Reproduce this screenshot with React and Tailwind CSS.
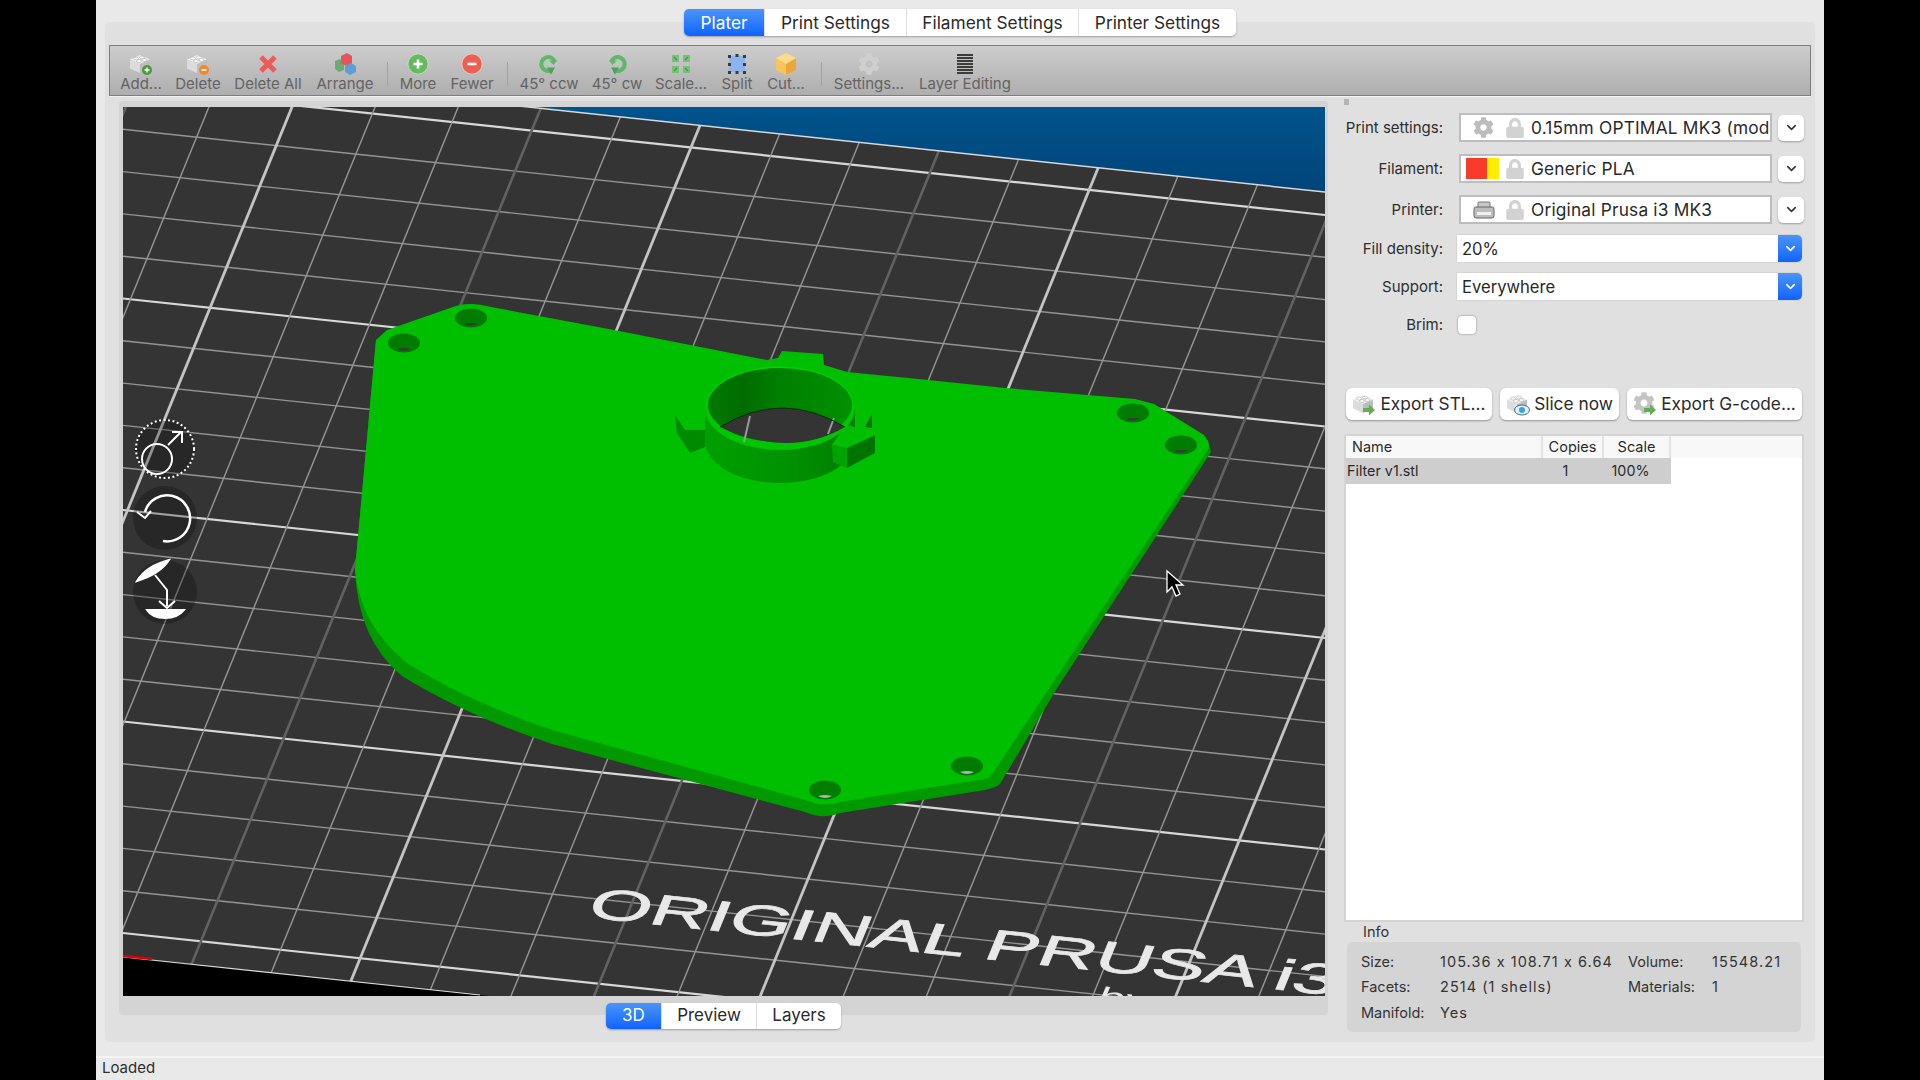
import { FaCog, FaLock } from 'react-icons/fa'
import { ChevronDown } from 'lucide-react'

function Brick({ className, badge }) {
  return (
    <svg viewBox="0 0 24 24" className={className}>
      <polygon points="11,3 21,7.5 11,12 1,7.5" fill="#f0f0f0" />
      <polygon points="1,7.5 11,12 11,21 1,16.5" fill="#dcdcdc" />
      <polygon points="21,7.5 11,12 11,21 21,16.5" fill="#bdbdbd" />
      <ellipse cx="7" cy="6.5" rx="2.4" ry="1.5" fill="#fff" stroke="#aaa" strokeWidth="0.6" />
      <ellipse cx="13" cy="5.5" rx="2.4" ry="1.5" fill="#fff" stroke="#aaa" strokeWidth="0.6" />
      <ellipse cx="10" cy="9" rx="2.4" ry="1.5" fill="#fff" stroke="#aaa" strokeWidth="0.6" />
      <ellipse cx="15.5" cy="8" rx="2.4" ry="1.5" fill="#fff" stroke="#aaa" strokeWidth="0.6" />
      {badge}
    </svg>
  )
}

const plusBadge = (
  <g>
    <circle cx="18" cy="18" r="5" fill="#4a9a3e" />
    <path d="M18 15.5v5M15.5 18h5" stroke="#fff" strokeWidth="1.4" />
  </g>
)
const minusBadge = (
  <g>
    <circle cx="18" cy="18" r="5" fill="#ee8a2c" />
    <path d="M15.5 18h5" stroke="#fff" strokeWidth="1.6" />
  </g>
)
const arrowBadge = <polygon points="11,16 17,16 17,12.5 23,18 17,23.5 17,20 11,20" fill="#62ad55" />
const eyeBadge = (
  <g>
    <ellipse cx="16" cy="18" rx="7.5" ry="5" fill="#dff0fa" stroke="#466a80" strokeWidth="1" />
    <circle cx="16" cy="18" r="3" fill="#3ea3dc" />
  </g>
)

function CircleBtn({ color, minus }) {
  return (
    <svg viewBox="0 0 22 22" className="w-[22px] h-[22px]">
      <circle cx="11" cy="11" r="10" fill={color} stroke="#ffffff" strokeOpacity="0.35" />
      <path d={minus ? 'M6.5 11h9' : 'M6.5 11h9M11 6.5v9'} stroke="#fff" strokeWidth="2.6" />
    </svg>
  )
}

function RotateIcon({ flip }) {
  return (
    <svg viewBox="0 0 22 22" className="w-[22px] h-[22px]">
      <g transform={flip ? 'translate(22 0) scale(-1 1)' : undefined}>
        <path d="M17 9A7 7 0 1 0 14 17" fill="none" stroke="#62b56c" strokeWidth="4" />
        <polygon points="9,14.500 17,14.500 13,21.500" fill="#4fa25a" />
        <path d="M11 7.500H19L15.500 12Z" fill="#62b56c" />
        <circle cx="10" cy="10.500" r="2.200" fill="#a4d8a8" />
      </g>
    </svg>
  )
}

function Tool({ w, label, children }) {
  return (
    <div className={`flex flex-col items-center shrink-0 ${w}`}>
      <div className="h-[23px] flex items-center justify-center">{children}</div>
      <span className="text-[15px] leading-[17px] text-[#636363] whitespace-nowrap">{label}</span>
    </div>
  )
}

function Sep({ w }) {
  return (
    <div className={`shrink-0 flex justify-center ${w}`}>
      <div className="w-px h-[24px] mt-[10px] bg-[#a2a2a2]" />
    </div>
  )
}

function Toolbar() {
  return (
    <div className="h-[51px] mx-[4px] flex pl-[7px] pt-[6px] border border-[#7d7d7d] bg-linear-to-b from-[#cdcdcd] to-[#aeaeae] shadow-[0_1px_0_#f4f4f4]">
      <Tool w="w-[48px]" label="Add...">
        <Brick className="w-[24px] h-[24px]" badge={plusBadge} />
      </Tool>
      <Tool w="w-[66px]" label="Delete">
        <Brick className="w-[24px] h-[24px]" badge={minusBadge} />
      </Tool>
      <Tool w="w-[74px]" label="Delete All">
        <svg viewBox="0 0 22 22" className="w-[22px] h-[22px]">
          <path d="M4 4L18 18M18 4L4 18" stroke="#ee5a5a" strokeWidth="5" />
        </svg>
      </Tool>
      <Tool w="w-[80px]" label="Arrange">
        <svg viewBox="0 0 24 24" className="w-[24px] h-[24px]">
          <polygon points="2,9 7,7 11,10 11,18 6,20 2,17" fill="#6cab74" />
          <polygon points="8,4 14,1 19,4 19,12 13,14 8,11" fill="#e6525f" />
          <polygon points="12,14 18,11 23,14 23,20 17,23 12,20" fill="#5c9fd6" />
        </svg>
      </Tool>
      <Sep w="w-[4px]" />
      <Tool w="w-[58px]" label="More">
        <CircleBtn color="#66b95c" />
      </Tool>
      <Tool w="w-[50px]" label="Fewer">
        <CircleBtn color="#ee5f52" minus />
      </Tool>
      <Sep w="w-[20px]" />
      <Tool w="w-[64px]" label="45° ccw">
        <RotateIcon />
      </Tool>
      <Tool w="w-[72px]" label="45° cw">
        <RotateIcon flip />
      </Tool>
      <Tool w="w-[56px]" label="Scale...">
        <svg viewBox="0 0 22 22" className="w-[22px] h-[22px]">
          <path d="M2 2h7v7H2zM13 2h7v7h-7zM2 13h7v7H2zM13 13h7v7h-7z" fill="#74c178" />
          <path d="M4 4l3 3M18 4l-3 3M4 18l3-3M18 18l-3-3" stroke="#3f9a48" strokeWidth="1.2" />
        </svg>
      </Tool>
      <Tool w="w-[56px]" label="Split">
        <svg viewBox="0 0 22 22" className="w-[22px] h-[22px]">
          <rect x="3" y="3" width="16" height="16" fill="#8eb4ee" />
          <path d="M2 2h3v3H2zM9.500 1h3v3h-3zM17 2h3v3h-3zM2 10h3v3H2zM17 10h3v3h-3zM2 18h3v3H2zM9.500 18h3v3h-3zM17 18h3v3h-3z" fill="#3b3b3b" />
        </svg>
      </Tool>
      <Tool w="w-[42px]" label="Cut...">
        <svg viewBox="0 0 24 24" className="w-[24px] h-[24px]">
          <polygon points="12,1 22,6 22,18 12,23 2,18 2,6" fill="#f6c65d" />
          <polygon points="12,12 22,6 22,18 12,23" fill="#eaa83a" />
          <polygon points="12,1 22,6 12,12 2,6" fill="#fbdc8d" />
        </svg>
      </Tool>
      <Sep w="w-[28px]" />
      <Tool w="w-[68px]" label="Settings...">
        <FaCog className="w-[22px] h-[22px] text-[#cfcfcf]" />
      </Tool>
      <Tool w="w-[124px]" label="Layer Editing">
        <div className="flex flex-col gap-[1px] w-[16px]">
          {[0, 1, 2, 3, 4, 5, 6].map((i) => (
            <div key={i} className="h-[2px] bg-[#3c3c3c]" />
          ))}
        </div>
      </Tool>
    </div>
  )
}

const segOn = 'flex items-center justify-center text-white bg-linear-to-b from-[#4a94f8] to-[#0f62fe]'
const segOff = 'flex items-center justify-center text-[#2a2a2a] bg-white border-l border-[#dedede]'

function TopTabs() {
  return (
    <div className="flex justify-center h-[27px] -mt-[13px]">
      <div className="flex rounded-[5px] overflow-hidden shadow-[0_1px_2px_rgba(0,0,0,0.3)] text-[17.300px]">
        <div className={`${segOn} w-[80px]`}>Plater</div>
        <div className={`${segOff} w-[142px]`}>Print Settings</div>
        <div className={`${segOff} w-[172px]`}>Filament Settings</div>
        <div className={`${segOff} w-[158px]`}>Printer Settings</div>
      </div>
    </div>
  )
}

// bed grid, lines follow the perspective of the reference
const hLines = Array.from({ length: 21 }, (_, k) => k)
const vLines = Array.from({ length: 26 }, (_, k) => k - 6)
const dimV = [-2, 3, 8, 13]

function Scene() {
  return (
    <svg viewBox="123 107 1202 889" className="block w-[1202px] h-[889px]">
      <defs>
        <linearGradient id="sky" x1="0" y1="0" x2="0" y2="1">
          <stop offset="0" stopColor="#00548c" />
          <stop offset="1" stopColor="#00447a" />
        </linearGradient>
        <linearGradient id="wall" x1="0" y1="0" x2="1" y2="0">
          <stop offset="0" stopColor="#007a00" />
          <stop offset="0.25" stopColor="#006c00" />
          <stop offset="0.5" stopColor="#008000" />
          <stop offset="1" stopColor="#009000" />
        </linearGradient>
        <linearGradient id="drum" x1="0" y1="0" x2="1" y2="0">
          <stop offset="0" stopColor="#00a000" />
          <stop offset="0.6" stopColor="#009000" />
          <stop offset="1" stopColor="#007c00" />
        </linearGradient>
        <clipPath id="bed">
          <polygon points="123,64 1325,192 1325,1085 123,957" />
        </clipPath>
        <filter id="soft">
          <feGaussianBlur stdDeviation="0.6" />
        </filter>
      </defs>
      <rect x="123" y="107" width="1202" height="889" fill="#000" />
      <polygon points="500,104 1325,192 1325,107 500,107" fill="url(#sky)" />
      <polygon points="123,64 1325,192 1325,1085 123,957" fill="#343434" />
      <g clipPath="url(#bed)">
        <g filter="url(#soft)">
          {hLines.map((k) => {
            const y0 = 87 + 42.3 * k
            const major = k % 5 === 0
            return (
              <line
                key={k}
                x1="123"
                y1={y0}
                x2="1325"
                y2={y0 + 128}
                stroke={major ? '#d8d8d8' : '#949494'}
                strokeWidth={major ? 2.2 : 1.4}
              />
            )
          })}
          {vLines.map((k) => {
            const x0 = 292 + 83.1 * k
            const major = k % 5 === 0
            const dim = dimV.includes(k)
            return (
              <line
                key={k}
                x1={x0 + 0.408 * 107}
                y1="0"
                x2={x0 - 0.408 * 1000}
                y2="1107"
                stroke={major ? '#c4c4c4' : dim ? '#626262' : '#969696'}
                strokeWidth={major ? 2.8 : dim ? 2.6 : 1.4}
              />
            )
          })}
          <text
            fontFamily="Liberation Sans"
            fontSize="42"
            fill="#e8e8e8"
            stroke="#e8e8e8"
            strokeWidth="0.7"
            transform="matrix(1.88 0.197 -0.41 1 585 917)"
          >
            ORIGINAL PRUSA i3
          </text>
          <text
            fontFamily="Liberation Sans"
            fontSize="26"
            fill="#e8e8e8"
            transform="matrix(1.84 0.193 -0.41 1 1095 1005)"
          >
            by
          </text>
        </g>
      </g>
      <line x1="500" y1="104" x2="1325" y2="192" stroke="#d8d8d8" strokeWidth="1.5" />
      <line x1="123" y1="957" x2="480" y2="995" stroke="#d8d8d8" strokeWidth="1.2" />
      <line x1="123" y1="956" x2="152" y2="959" stroke="#e00000" strokeWidth="2.5" />

      {/* plate */}
      <path
        d="M376 340 L355 570 Q358 640 402 676 Q465 715 552 744 L805 812 Q824 820 840 813 L985 790 Q997 787 1000 784 L1056 690 L1211 452 L1208 440 Z"
        fill="#009a00"
      />
      <path
        d="M376 340 L387 330 L453 307 Q468 301 491 307 L614 330 L690 345 L767 360 L778 358 L782 351 L823 354 L824 365 L847 372 L928 380 L1005 388 L1135 399 L1154 404 L1204 435 Q1211 444 1208 450 L1048 690 L993 773 Q990 780 978 780 L840 802 Q826 807 812 802 L798 798 L552 730 Q465 700 407 663 Q360 625 355 570 Z"
        fill="#00bf00"
      />
      {[
        [404, 343],
        [471, 318],
        [1133, 413],
        [1181, 445],
        [825, 790],
        [967, 766],
      ].map(([cx, cy]) => (
        <g key={cx}>
          <ellipse cx={cx} cy={cy} rx="16" ry="9.500" fill="#007c00" />
          <path
            d={`M${cx - 7} ${cy + 6} Q${cx} ${cy + 4} ${cx + 7} ${cy + 6} Q${cx} ${cy + 10} ${cx - 7} ${cy + 6}`}
            fill={cy > 700 ? '#b0b0b0' : '#3a3a3a'}
          />
        </g>
      ))}

      {/* filter ring */}
      <polygon points="675,415 677,433 690,453 705,447 705,430 685,430" fill="#008a00" />
      <polygon points="872,414 872,428 865,427" fill="#007000" />
      <path d="M705 408 L705 441 A75 42 0 0 0 855 441 L855 408 Z" fill="url(#drum)" />
      <polygon points="847,448 875,435 875,453 847,468" fill="#007400" />
      <polygon points="832,445 847,448 847,468 833,462" fill="#00a400" />
      <polygon points="832,445 847,448 875,435 870,430 845,425" fill="#00bf00" />
      <ellipse cx="780" cy="408" rx="75" ry="42" fill="#00c600" />
      <path d="M706 402 A75 42 0 0 1 854 402 A75 38 0 0 0 706 402 Z" fill="#00d800" />
      <ellipse cx="780" cy="405" rx="72" ry="37" fill="url(#wall)" />
      <path d="M720 427 Q782 389 845 427 Q790 459 720 427 Z" fill="#343434" />
      <path d="M744 442 L750 416 M828 434 L834 418" stroke="#9a9a9a" strokeWidth="2" />
      <path d="M720 427 Q782 389 845 427" fill="none" stroke="#003000" strokeWidth="1" />

      {/* gizmos */}
      <g fill="none" stroke="#fff" strokeWidth="2">
        <circle cx="165" cy="449" r="30" fill="#000" fillOpacity="0.25" stroke="none" />
        <circle cx="165" cy="518" r="32" fill="#000" fillOpacity="0.25" stroke="none" />
        <circle cx="165" cy="592" r="32" fill="#000" fillOpacity="0.25" stroke="none" />
        <circle cx="165" cy="449" r="29" strokeDasharray="2 2.500" strokeWidth="2" />
        <circle cx="157" cy="459" r="15" />
        <path d="M168 445L181 432M172 432H182V443" />
        <path d="M163 541A23 23 0 1 0 145 512" strokeWidth="2.500" />
        <path d="M137 512L145 518L151 511" />
        <path d="M155 575L167 590V606M159 601L167 608L175 601" />
        <path d="M137 581Q146 566 169 560Q160 574 137 581Z" fill="#fff" />
        <path d="M147 610H184Q178 618 165 618Q152 618 147 610Z" fill="#fff" />
      </g>

      {/* mouse pointer */}
      <path
        d="M1167 571L1167 592L1172 587L1176 596L1180 594L1176 585L1183 585Z"
        fill="#000"
        stroke="#fff"
        strokeWidth="1.3"
      />
    </svg>
  )
}

function Combo({ label, icon, text }) {
  return (
    <div className="flex items-center h-[29px]">
      <span className="w-[99px] pt-[2px] text-right text-[15px] text-[#2e2e2e] whitespace-nowrap">{label}</span>
      <div className="ml-[16px] w-[313px] h-[29px] flex items-center bg-white border-2 border-[#bdbdbd] overflow-hidden">
        <div className="w-[45px] shrink-0 flex justify-center">{icon}</div>
        <FaLock className="w-[18px] h-[20px] text-[#d2d2d2] shrink-0" />
        <span className="ml-[7px] text-[17.300px] tracking-[0.2px] text-[#2a2a2a] whitespace-nowrap">{text}</span>
      </div>
      <div className="ml-[6px] w-[26px] h-[26px] flex items-center justify-center bg-white rounded-[5px] shadow-[0_1px_2px_rgba(0,0,0,0.3)]">
        <ChevronDown className="w-[15px] h-[15px] text-[#333]" strokeWidth={2.5} />
      </div>
    </div>
  )
}

function Select({ label, value, mt }) {
  return (
    <div className={`flex items-center h-[27px] ${mt}`}>
      <span className="w-[99px] pt-[2px] text-right text-[15px] text-[#2e2e2e]">{label}</span>
      <div className="ml-[14px] w-[345px] h-[27px] flex bg-white rounded-r-[5px] overflow-hidden shadow-[0_0_1px_rgba(0,0,0,0.5)]">
        <span className="flex-1 pl-[5px] text-[16.600px] leading-[28px] text-[#2a2a2a]">{value}</span>
        <div className="w-[24px] flex items-center justify-center bg-linear-to-b from-[#4a94f8] to-[#0f62fe]">
          <ChevronDown className="w-[15px] h-[15px] text-white" strokeWidth={2.5} />
        </div>
      </div>
    </div>
  )
}

function ExportBtn({ w, icon, text }) {
  return (
    <div className={`${w} h-[32px] flex items-center justify-center gap-[4px] bg-white rounded-[6px] shadow-[0_1px_2px_rgba(0,0,0,0.35)] text-[17.300px] text-[#2a2a2a] whitespace-nowrap`}>
      {icon}
      {text}
    </div>
  )
}

function InfoRow({ a, b, c, d }) {
  return (
    <div className="flex h-[25.500px] items-center">
      <span className="w-[79px] shrink-0">{a}</span>
      <span className="w-[188px] shrink-0 tracking-[1.05px]">{b}</span>
      <span className="w-[84px] shrink-0">{c}</span>
      <span className="tracking-[1.1px]">{d}</span>
    </div>
  )
}

function SidePanel() {
  return (
    <div className="w-[460px] shrink-0">
      <div className="h-[6px] w-[5px] mt-[3px] bg-[#b4b4b4]" />
      <div className="mt-[8px] flex flex-col gap-[12px]">
        <Combo
          label="Print settings:"
          icon={<FaCog className="w-[21px] h-[21px] text-[#bcbcbc]" />}
          text="0.15mm OPTIMAL MK3 (mod"
        />
        <Combo
          label="Filament:"
          icon={
            <div className="flex h-[21px] ml-[-2px]">
              <div className="w-[21px] bg-[#fa3a2a]" />
              <div className="w-[12px] bg-[#fdee00]" />
            </div>
          }
          text="Generic PLA"
        />
        <Combo
          label="Printer:"
          icon={
            <svg viewBox="0 0 22 18" className="w-[22px] h-[18px]">
              <rect x="5" y="1" width="12" height="6" rx="1" fill="#c8c8c8" stroke="#777" />
              <rect x="1" y="6" width="20" height="11" rx="2" fill="#bdbdbd" stroke="#666" />
              <rect x="4" y="11" width="14" height="3" fill="#efefef" />
            </svg>
          }
          text="Original Prusa i3 MK3"
        />
      </div>
      <Select label="Fill density:" value="20%" mt="mt-[11px]" />
      <Select label="Support:" value="Everywhere" mt="mt-[11px]" />
      <div className="flex items-center h-[18px] mt-[16px]">
        <span className="w-[99px] text-right text-[15px] text-[#2e2e2e]">Brim:</span>
        <div className="ml-[15px] w-[18px] h-[18px] bg-white rounded-[4px] shadow-[0_0_2px_rgba(0,0,0,0.5)]" />
      </div>
      <div className="flex gap-[8px] mt-[54px] ml-[2px]">
        <ExportBtn w="w-[146px]" icon={<Brick className="w-[24px] h-[24px]" badge={arrowBadge} />} text="Export STL..." />
        <ExportBtn w="w-[119px]" icon={<Brick className="w-[24px] h-[24px]" badge={eyeBadge} />} text="Slice now" />
        <ExportBtn
          w="w-[175px]"
          icon={
            <span className="relative w-[24px] h-[24px]">
              <FaCog className="w-[22px] h-[22px] text-[#c4c4c4]" />
              <svg viewBox="0 0 24 24" className="absolute inset-0 w-[24px] h-[24px]">
                {arrowBadge}
              </svg>
            </span>
          }
          text="Export G-code..."
        />
      </div>
      <div className="mt-[14px] h-[488px] border-2 border-[#d4d4d4] bg-white text-[#2a2a2a]">
        <div className="flex h-[22px] items-center bg-[#f8f8f8] text-[14.500px]">
          <span className="w-[195px] pl-[6px]">Name</span>
          <span className="w-[61px] text-center border-l-2 border-[#e2e2e2]">Copies</span>
          <span className="w-[69px] text-center border-l-2 border-r-2 border-[#e2e2e2]">Scale</span>
        </div>
        <div className="flex w-[325px] h-[26px] items-center bg-[#cecece] text-[14.300px]">
          <span className="w-[195px] pl-px">Filter v1.stl</span>
          <span className="w-[61px] pr-[12px] text-center">1</span>
          <span className="w-[69px] pr-[12px] text-center">100%</span>
        </div>
      </div>
      <div className="h-[20px] pl-[19px] text-[14.500px] leading-[20px] text-[#333]">Info</div>
      <div className="ml-[3px] w-[454px] h-[90px] px-[14px] py-[7px] bg-[#d4d4d4] rounded-[5px] text-[14.500px] text-[#333]">
        <InfoRow a="Size:" b="105.36 x 108.71 x 6.64" c="Volume:" d="15548.21" />
        <InfoRow a="Facets:" b="2514 (1 shells)" c="Materials:" d="1" />
        <InfoRow a="Manifold:" b="Yes" />
      </div>
    </div>
  )
}

export default function App() {
  return (
    <div className="w-[1920px] h-[1080px] flex justify-center bg-black overflow-hidden [font-family:Inter,'Liberation_Sans',sans-serif]">
      <div className="w-[1728px] h-[1080px] flex flex-col bg-[#e9e9e9]">
        <div className="mt-[22px] mx-[9px] w-[1710px] h-[1020px] bg-[#e0e0e0] rounded-[5px]">
          <TopTabs />
          <div className="h-[9px]" />
          <Toolbar />
          <div className="flex">
            <div className="ml-[14px] w-[1209px] mr-[16px] shrink-0 pt-[5px]">
              <div className="h-[914px] bg-[#d4d4d4] rounded-[4px] pt-[6px] pl-[4px]">
                <Scene />
              </div>
              <div className="flex justify-center h-[26px] -mt-[12px]">
                <div className="flex rounded-[5px] overflow-hidden shadow-[0_1px_2px_rgba(0,0,0,0.3)] text-[17px]">
                  <div className={`${segOn} w-[55px]`}>3D</div>
                  <div className={`${segOff} w-[95px]`}>Preview</div>
                  <div className={`${segOff} w-[85px]`}>Layers</div>
                </div>
              </div>
            </div>
            <SidePanel />
          </div>
        </div>
        <div className="mt-[14px] flex-1 border-t-2 border-[#f4f4f4] pl-[6px] text-[15px] leading-[20px] text-[#2e2e2e]">
          Loaded
        </div>
      </div>
    </div>
  )
}
